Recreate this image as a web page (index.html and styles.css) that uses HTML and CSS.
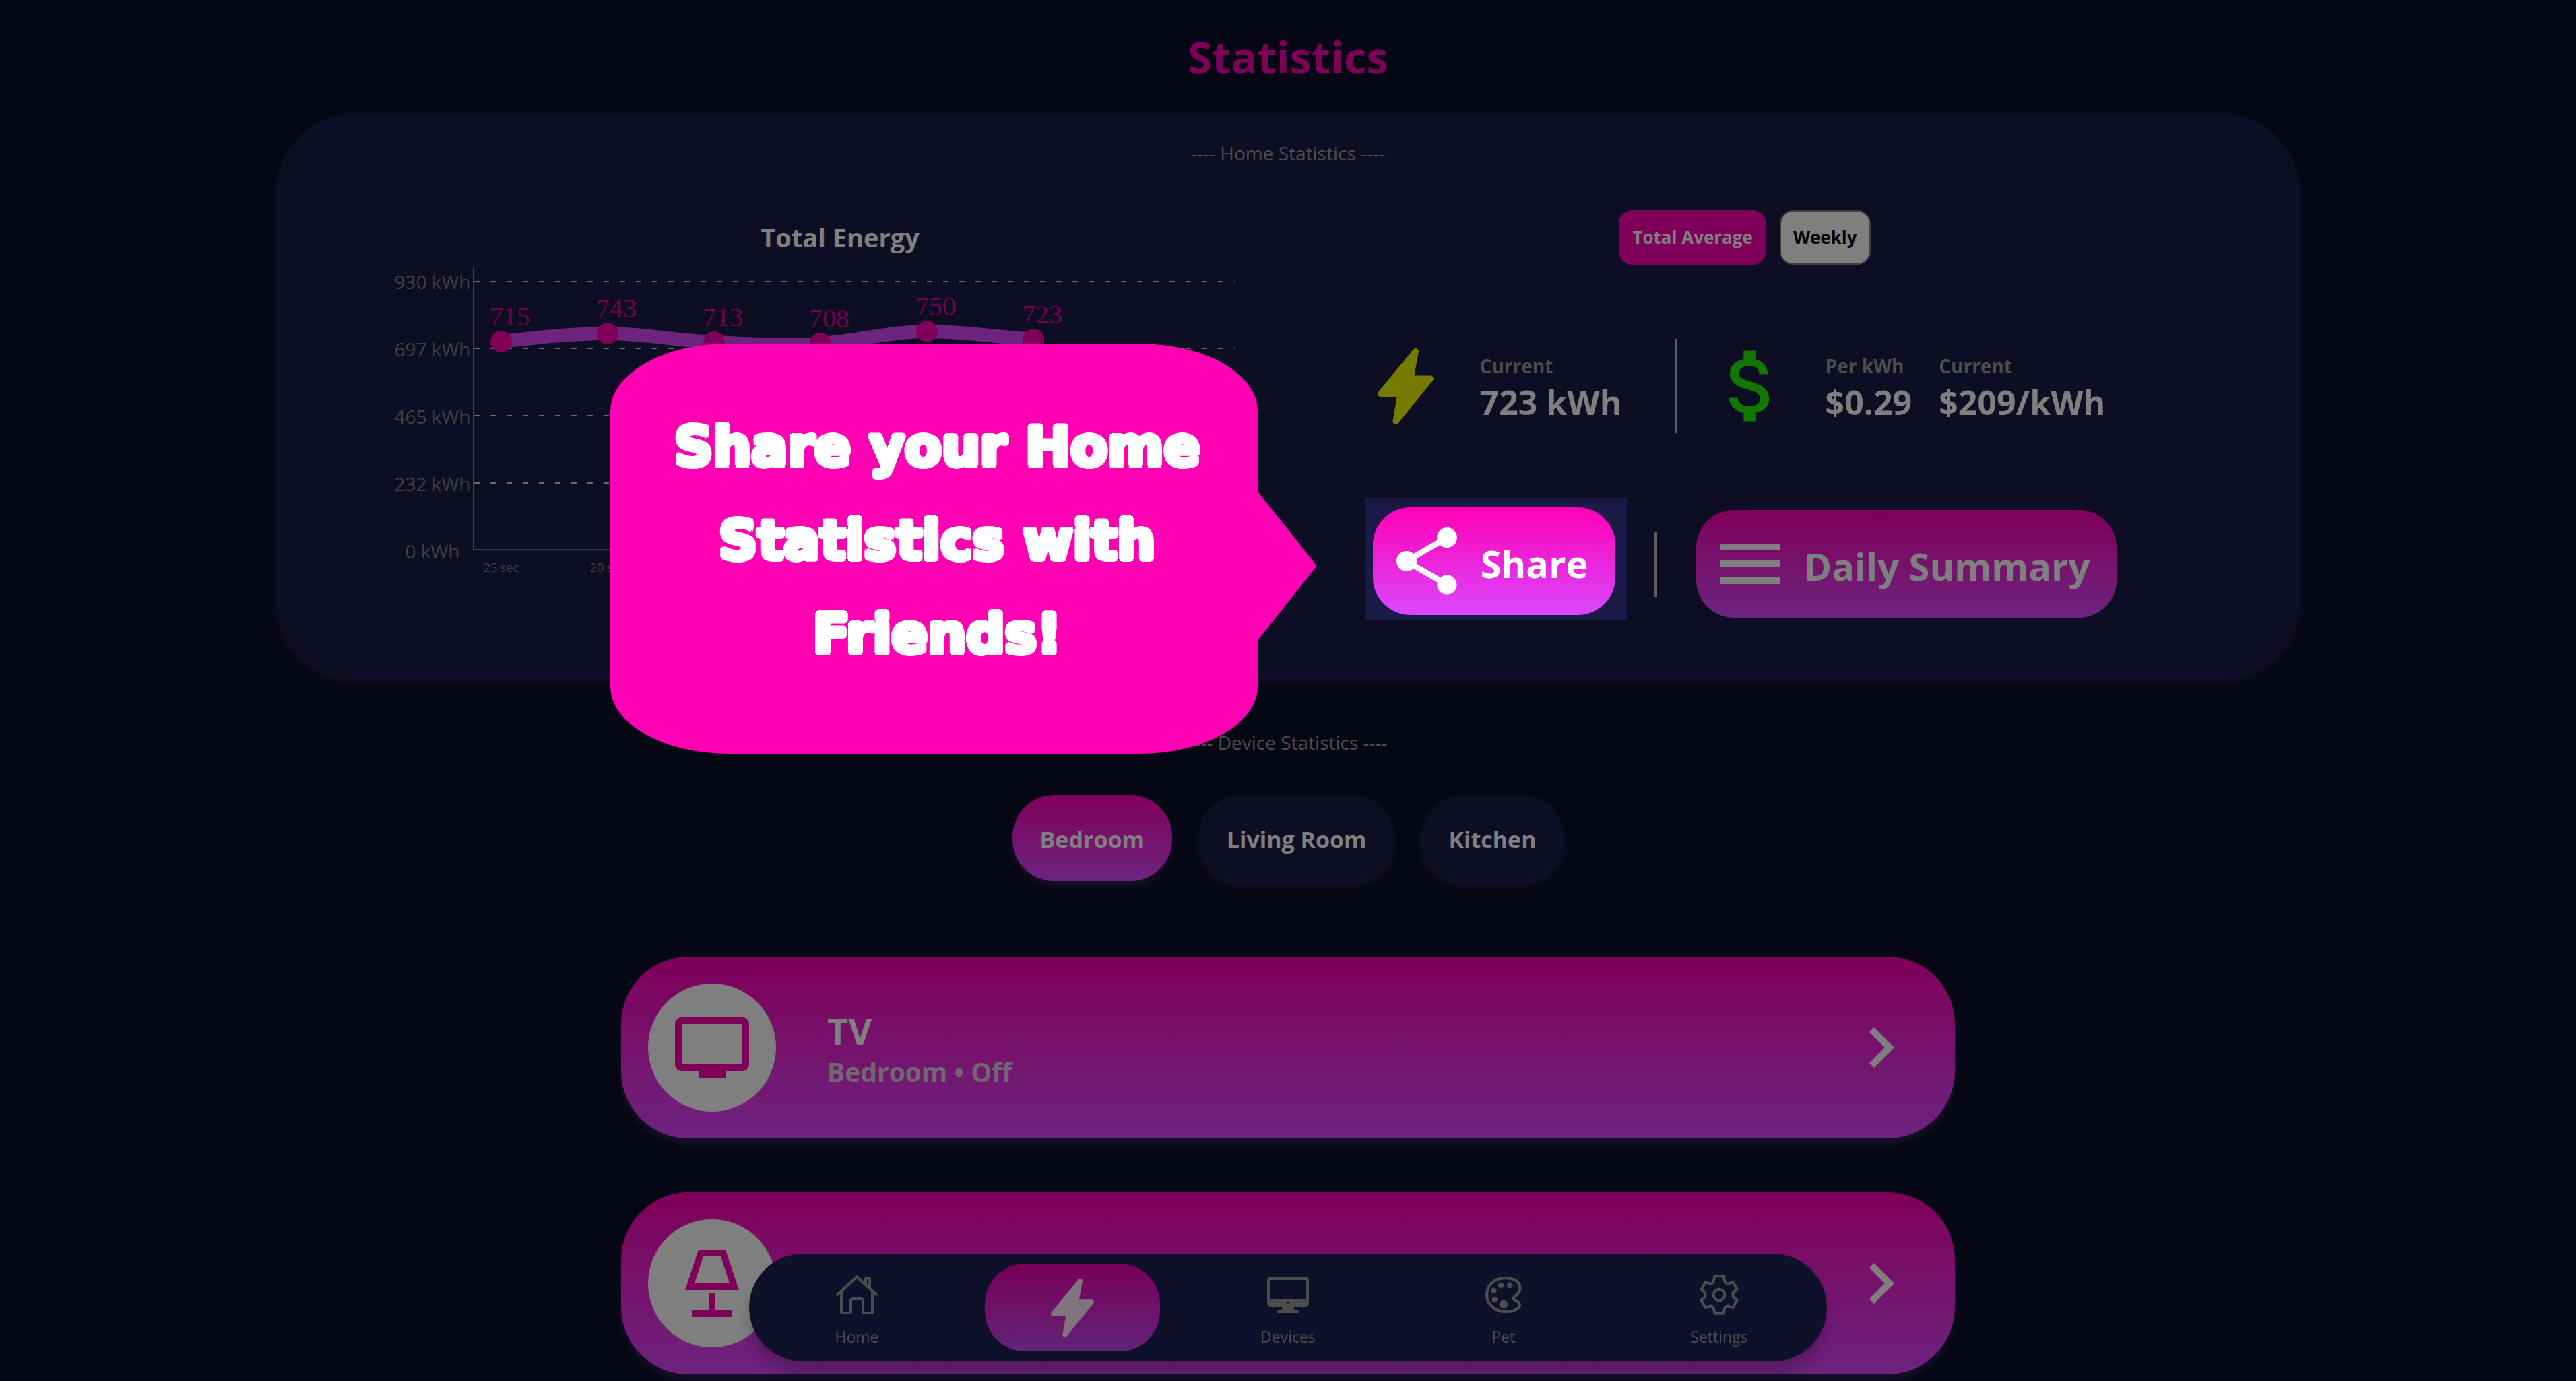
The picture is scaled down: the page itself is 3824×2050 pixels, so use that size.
FILE: index.html
```html
<!DOCTYPE html>
<html lang="en">
<head>
<meta charset="utf-8">
<meta name="viewport" content="width=device-width, initial-scale=1">
<title>Statistics</title>
<link rel="stylesheet" href="styles.css">
</head>
<body>
<header class="page-header">
  <h1 class="page-title">Statistics</h1>
</header>

<main class="page">
  <section class="home-card">
    <h2 class="section-label">---- Home Statistics ----</h2>
    <div class="home-grid">
      <div class="chart-col">
        <h3 class="chart-title">Total Energy</h3>
        <svg class="chart" viewBox="0 0 1370 470" role="img" aria-label="Total Energy">
          <g class="grid-lines">
            <path d="M142 25H1272M142 124H1272M142 224H1272M142 324H1272"/>
          </g>
          <path class="axis" d="M141 4V423H1272"/>
          <g class="y-labels">
            <text x="80" y="36">930 kWh</text>
            <text x="80" y="136">697 kWh</text>
            <text x="80" y="236">465 kWh</text>
            <text x="80" y="336">232 kWh</text>
            <text x="80" y="436">0 kWh</text>
          </g>
          <g class="x-labels">
            <text x="182" y="456">25 sec</text>
            <text x="340" y="456">20 sec</text>
          </g>
          <path class="series" d="M182 114C235 108 287 102 340 102S445 113 498 115S603 121 656 117S762 99 814 99S920 107 972 111"/>
          <g class="points">
            <circle cx="182" cy="114" r="16"/>
            <circle cx="340" cy="102" r="16"/>
            <circle cx="498" cy="115" r="16"/>
            <circle cx="656" cy="117" r="16"/>
            <circle cx="814" cy="99" r="16"/>
            <circle cx="972" cy="111" r="16"/>
          </g>
          <g class="values">
            <text x="165" y="90">715</text>
            <text x="323" y="78">743</text>
            <text x="481" y="91">713</text>
            <text x="639" y="93">708</text>
            <text x="797" y="75">750</text>
            <text x="955" y="87">723</text>
          </g>
        </svg>
      </div>

      <div class="summary-col">
        <div class="tags">
          <button class="tag tag-active" type="button">Total Average</button>
          <button class="tag" type="button">Weekly</button>
        </div>

        <div class="stats">
          <div class="stat">
            <span class="stat-icon"><svg class="bolt-large" viewBox="0 0 83 113" aria-hidden="true"><path d="M56.500 4.500L49 45H78.500L27 108.500L34 67.500H4.500Z"/></svg></span>
            <dl class="metric"><dt>Current</dt><dd>723 kWh</dd></dl>
          </div>
          <span class="divider divider-tall"></span>
          <div class="stat">
            <svg class="dollar" viewBox="0 0 24 24" aria-hidden="true"><path d="M11.800 10.900c-2.270-.59-3-1.200-3-2.150 0-1.090 1.010-1.850 2.700-1.850 1.780 0 2.440.85 2.500 2.100h2.210c-.07-1.720-1.120-3.300-3.210-3.810V3h-3v2.160c-1.940.42-3.500 1.680-3.500 3.610 0 2.310 1.910 3.460 4.700 4.130 2.500.6 3 1.480 3 2.410 0 .69-.49 1.790-2.700 1.790-2.060 0-2.870-.92-2.980-2.100h-2.200c.12 2.190 1.760 3.420 3.680 3.830V21h3v-2.150c1.950-.37 3.500-1.500 3.500-3.550 0-2.840-2.430-3.810-4.700-4.400z"/></svg>
            <dl class="metric"><dt>Per kWh</dt><dd>$0.29</dd></dl>
            <dl class="metric"><dt>Current</dt><dd>$209/kWh</dd></dl>
          </div>
        </div>

        <div class="actions">
          <div class="tour-target">
            <button class="action" type="button">
              <svg class="icon" viewBox="0 0 24 24" aria-hidden="true"><path d="M18 16.080c-.76 0-1.440.3-1.960.77L8.910 12.700c.05-.23.09-.46.09-.7s-.04-.47-.09-.7l7.050-4.110c.54.5 1.250.81 2.040.81 1.660 0 3-1.340 3-3s-1.340-3-3-3-3 1.340-3 3c0 .24.04.47.09.7L8.040 9.810C7.500 9.310 6.790 9 6 9c-1.660 0-3 1.340-3 3s1.340 3 3 3c.79 0 1.500-.31 2.040-.81l7.120 4.160c-.05.21-.08.43-.08.65 0 1.610 1.310 2.920 2.920 2.920 1.610 0 2.920-1.310 2.920-2.920s-1.310-2.920-2.920-2.920z"/></svg>
              <span class="action-label">Share</span>
            </button>
            <div class="bubble" role="tooltip"><p class="bubble-text">Share your Home Statistics with Friends!</p></div>
          </div>
          <span class="divider"></span>
          <button class="action" type="button">
            <svg class="icon" viewBox="0 0 24 24" aria-hidden="true"><path d="M3 18h18v-2H3v2zm0-5h18v-2H3v2zm0-7v2h18V6H3z"/></svg>
            <span class="action-label">Daily Summary</span>
          </button>
        </div>
      </div>
    </div>
  </section>

  <section class="device-section">
    <h2 class="section-label">---- Device Statistics ----</h2>
    <div class="rooms">
      <button class="room room-active" type="button">Bedroom</button>
      <button class="room" type="button">Living Room</button>
      <button class="room" type="button">Kitchen</button>
    </div>
    <div class="devices">
      <a class="device" href="#tv">
        <span class="device-badge"><svg class="icon" viewBox="0 0 24 24" aria-hidden="true"><path d="M21 3H3c-1.100 0-2 .9-2 2v12c0 1.100.9 2 2 2h5v2h8v-2h5c1.100 0 2-.9 2-2V5c0-1.100-.9-2-2-2zm0 14H3V5h18v12z"/></svg></span>
        <span class="device-text">
          <span class="device-name">TV</span>
          <span class="device-status">Bedroom • Off</span>
        </span>
        <svg class="icon" viewBox="0 0 24 24" aria-hidden="true"><path d="M10 6L8.590 7.410 13.170 12l-4.580 4.590L10 18l6-6z"/></svg>
      </a>
      <a class="device" href="#lamp" aria-label="Lamp">
        <span class="device-badge"><svg class="icon" viewBox="0 0 24 24" aria-hidden="true"><path fill-rule="evenodd" d="M8 2h8l4 12H4zM9.400 4L6.800 12h10.400L14.600 4zM11 15h2v5h5v2H6v-2h5z"/></svg></span>
        <span class="device-text"></span>
        <svg class="icon" viewBox="0 0 24 24" aria-hidden="true"><path d="M10 6L8.590 7.410 13.170 12l-4.580 4.590L10 18l6-6z"/></svg>
      </a>
    </div>
  </section>
</main>

<nav class="nav" aria-label="Main">
  <a class="nav-item" href="#home">
    <span class="nav-icon"><svg width="62" height="58" viewBox="0 0 62 58" aria-hidden="true"><path class="line" stroke-width="4" d="M2 29L31 2L60 29M8 25V54q0 2 2 2H20q2 0 2-2V38q0-3 3-3H37q3 0 3 3V54q0 2 2 2H52q2 0 2-2V25M44 12V6q0-2 2-2H48q2 0 2 2V19"/></svg></span>
    <span>Home</span>
  </a>
  <a class="nav-item nav-active" href="#statistics" aria-label="Statistics">
    <svg class="bolt-nav" viewBox="0 0 83 113" aria-hidden="true"><path d="M56.500 4.500L49 45H78.500L27 108.500L34 67.500H4.500Z"/></svg>
  </a>
  <a class="nav-item" href="#devices">
    <span class="nav-icon"><svg width="62" height="54" viewBox="0 0 62 54" aria-hidden="true"><path class="solid" fill-rule="evenodd" d="M6 0H56q6 0 6 6V39q0 6-6 6H40q-1 3 1 5H45q2 0 2 2t-2 2H17q-2 0-2-2t2-2H21q2-2 1-5H6q-6 0-6-6V6q0-6 6-6ZM6 5q-2 0-2 2V33H58V7q0-2-2-2ZM31 37a2 2 0 1 0 0 4a2 2 0 1 0 0-4Z"/></svg></span>
    <span>Devices</span>
  </a>
  <a class="nav-item" href="#pet">
    <span class="nav-icon"><svg width="54" height="54" viewBox="0 0 162 163" aria-hidden="true"><path class="line" stroke-width="13" d="M92 6.500C40 5 6 38 6 82C6 126 44 157 92 157C130 157 153 142 153 126C153 107 126 111 126 98C126 86 155 80 155 52C155 22 128 7 92 6.500Z"/><g class="solid"><circle cx="69" cy="39" r="13"/><circle cx="109" cy="39" r="13"/><circle cx="37" cy="63" r="13"/><circle cx="41" cy="103" r="13"/><circle cx="81" cy="124" r="19"/></g></svg></span>
    <span>Pet</span>
  </a>
  <a class="nav-item" href="#settings">
    <span class="nav-icon"><svg width="58" height="60" viewBox="0 0 174 180" aria-hidden="true"><path class="line" stroke-width="12" d="M62 32L67 7H107L112 32Q118 43 130 40L148 33L167 66L150 80Q146 90 150 100L167 114L148 147L130 140Q118 137 112 148L107 173H67L62 148Q56 137 44 140L26 147L7 114L24 100Q28 90 24 80L7 66L26 33L44 40Q56 43 62 32Z"/><circle class="line" stroke-width="12" cx="87" cy="90" r="25"/></svg></span>
    <span>Settings</span>
  </a>
</nav>
</body>
</html>
```
FILE: styles.css
```css
:root {
  --pink: #ff00b3;
  --violet: #da48ff;
  --panel: #1a1a47;
  --muted: #999;
  --glow: 0 8px 10px 0 #2a2052;
  --fade: linear-gradient(var(--pink), var(--violet));
}

* {
  box-sizing: border-box;
}

body {
  margin: 0;
  min-height: 100vh;
  background: #0b0f28;
  color: #fff;
  font-family: "Open Sans", "Noto Sans", sans-serif;
  overflow-x: hidden;
}

h1, h2, h3, p, dl, dd {
  margin: 0;
}

button {
  border: 0;
  color: inherit;
  font-family: inherit;
  cursor: pointer;
}

a {
  color: inherit;
  text-decoration: none;
}

.icon {
  flex: none;
  width: 120px;
  height: 120px;
  fill: currentColor;
}

.page-header {
  padding: 34px 0 33px;
  text-align: center;
}

.page-title {
  color: var(--pink);
  font-size: 65px;
  line-height: 100px;
}

.page {
  display: flex;
  flex-direction: column;
  align-items: center;
  gap: 78px;
}

.section-label {
  color: var(--muted);
  font-size: 28px;
  font-weight: 400;
  line-height: 40px;
  text-align: center;
}

/* Home statistics */
.home-card {
  width: min(3004px, 98%);
  padding: 40px 0 83px;
  border-radius: 120px;
  background: var(--panel);
  box-shadow: var(--glow);
}

.home-grid {
  display: grid;
  grid-template-columns: minmax(0, 1370fr) minmax(0, 1108fr);
  gap: 104px;
  margin-top: 65px;
  padding: 0 270px 0 152px;
}

.chart-title {
  font-size: 38px;
  line-height: 81px;
  text-align: center;
}

.chart {
  display: block;
  width: 100%;
}

.grid-lines path {
  stroke: #d9d9d9;
  stroke-width: 2;
  stroke-dasharray: 8 16;
}

.axis {
  fill: none;
  stroke: #808080;
  stroke-width: 2;
}

.y-labels, .x-labels {
  fill: #808080;
  text-anchor: middle;
}

.y-labels {
  font-size: 28px;
}

.x-labels {
  font-size: 18px;
}

.series {
  fill: none;
  stroke: var(--violet);
  stroke-width: 20;
}

.points {
  fill: var(--pink);
}

.values {
  fill: #e000a0;
  font-family: "Liberation Serif", serif;
  font-size: 40px;
}

.summary-col {
  display: flex;
  flex-direction: column;
  align-items: center;
  gap: 110px;
}

.tags {
  display: flex;
  gap: 20px;
}

.tag {
  padding: 0 18px;
  border: 2px solid #808080;
  border-radius: 20px;
  background: #fff;
  color: #000;
  font-size: 26px;
  font-weight: 700;
  line-height: 77px;
}

.tag-active {
  border-color: var(--pink);
  background: var(--pink);
  color: #fff;
}

.stats, .actions {
  display: flex;
  align-items: center;
  white-space: nowrap;
}

.stats {
  gap: 40px;
}

.actions {
  gap: 58px;
}

.stat {
  display: flex;
  align-items: center;
  gap: 40px;
  padding-right: 38px;
}

.stat-icon {
  display: flex;
  justify-content: center;
  width: 140px;
}

.bolt-large {
  width: 83px;
  height: 113px;
  fill: #eef500;
  stroke: #eef500;
  stroke-width: 9;
  stroke-linejoin: round;
}

.dollar {
  width: 140px;
  height: 140px;
  fill: #22ee00;
}

.metric {
  padding-top: 8px;
}

.metric dt {
  color: var(--muted);
  font-size: 28px;
  font-weight: 700;
  line-height: 40px;
}

.metric dd {
  font-size: 50px;
  font-weight: 700;
  line-height: 68px;
}

.divider {
  width: 4px;
  height: 97px;
  background: #bbb;
}

.divider-tall {
  height: 140px;
}

.action {
  display: flex;
  align-items: center;
  gap: 20px;
  padding: 20px 40px 20px 20px;
  border-radius: 56px;
  background: var(--fade);
  font-size: 56px;
  font-weight: 700;
}

.action-label {
  padding-top: 6px;
}

/* Guided tour: lights up one control and dims everything else */
.tour-target {
  position: relative;
  z-index: 20;
  margin-bottom: 8px;
}

.tour-target::before {
  content: "";
  position: absolute;
  inset: -14px -17px -7px -11px;
  box-shadow: 0 0 0 5000px rgba(0, 0, 0, 0.5);
  pointer-events: none;
}

.bubble {
  position: absolute;
  top: -243px;
  right: calc(100% + 171px);
  width: 961px;
  padding: 84px 44px 108px 54px;
  border-radius: 176px / 100px;
  background: var(--pink);
}

.bubble::after {
  content: "";
  position: absolute;
  top: 218px;
  left: calc(100% - 1px);
  width: 89px;
  height: 224px;
  background: var(--pink);
  clip-path: polygon(0 0, 100% 50%, 0 100%);
}

.bubble-text {
  font-family: "DejaVu Sans", sans-serif;
  font-size: 80px;
  font-weight: 700;
  line-height: 139px;
  text-align: center;
  white-space: normal;
  text-shadow: 4px 0, 3px 3px, 0 4px, -3px 3px,
    -4px 0, -3px -3px, 0 -4px, 3px -3px;
}

/* Device statistics */
.device-section {
  width: 100%;
}

.rooms {
  display: flex;
  justify-content: center;
  gap: 40px;
  margin: 58px 0 112px;
}

.room {
  padding: 4px 41px 0;
  border-radius: 62px;
  background: var(--panel);
  box-shadow: var(--glow);
  font-size: 34px;
  font-weight: 700;
  line-height: 124px;
}

.room-active {
  background: var(--fade);
}

.devices {
  display: flex;
  flex-direction: column;
  align-items: center;
  gap: 80px;
}

.device {
  display: flex;
  align-items: center;
  width: min(1980px, 96%);
  padding: 40px 50px 40px 40px;
  border-radius: 100px;
  background: var(--fade);
  box-shadow: var(--glow);
}

.device-badge {
  display: flex;
  align-items: center;
  justify-content: center;
  width: 190px;
  height: 190px;
  border-radius: 50%;
  background: #fff;
  color: var(--pink);
}

.device-text {
  display: flex;
  flex: 1;
  flex-direction: column;
  padding: 6px 0 0 76px;
  font-weight: 700;
}

.device-name {
  font-size: 54px;
  line-height: 66px;
}

.device-status {
  color: #e0cfe4;
  font-size: 39px;
  line-height: 56px;
}

/* Bottom navigation */
.nav {
  position: fixed;
  right: 0;
  bottom: 29px;
  left: 0;
  z-index: 10;
  display: grid;
  grid-template-columns: repeat(5, 1fr);
  width: min(1600px, 96%);
  margin: 0 auto;
  padding: 15px 0;
  border-radius: 80px;
  background: #1f2154;
  box-shadow: 0 20px 20px rgba(0, 0, 0, 0.2);
  color: #999;
}

.nav-item {
  display: flex;
  flex-direction: column;
  align-items: center;
  justify-content: space-between;
  padding: 14px 0 6px;
  font-size: 23px;
  line-height: 32px;
}

.nav-icon {
  display: flex;
  align-items: center;
  height: 64px;
}

.nav-active {
  justify-content: center;
  width: 260px;
  height: 130px;
  margin: 0 auto;
  padding: 0;
  border-radius: 60px;
  background: linear-gradient(#f400b0, #c546f2);
}

.bolt-nav {
  width: 64px;
  height: 87px;
  fill: #ffeafc;
  stroke: #ffeafc;
  stroke-width: 9;
  stroke-linejoin: round;
}

.line {
  fill: none;
  stroke: currentColor;
  stroke-linecap: round;
  stroke-linejoin: round;
}

.solid {
  fill: currentColor;
}
```
